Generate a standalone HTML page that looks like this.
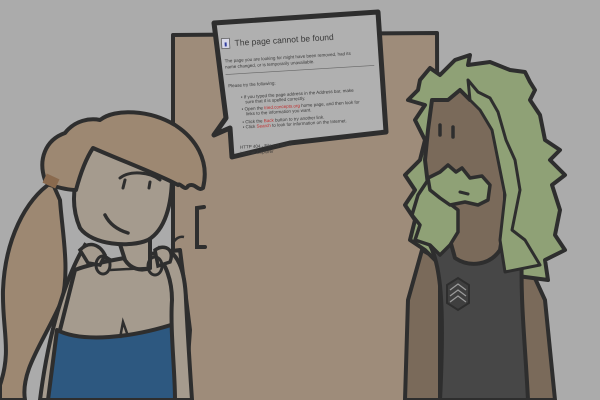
<!DOCTYPE html>
<html><head><style>
html,body{margin:0;padding:0;background:#ababab;width:600px;height:400px;overflow:hidden}
svg{display:block}
.t{font-family:"Liberation Sans",sans-serif;fill:#3a3a3a}
</style></head><body>
<svg width="600" height="400" viewBox="0 0 600 400" xmlns="http://www.w3.org/2000/svg">
<rect width="600" height="400" fill="#ababab"/>
<path d="M173 405 L173 35 L437 33 L438 405 Z" fill="#9e8c7a" stroke="#2e2e2e" stroke-width="4" stroke-linejoin="round"/>
<path d="M204 207 L197 208 L197 247 L205 247" fill="none" stroke="#2e2e2e" stroke-width="4" stroke-linecap="round"/>
<g>
<path d="M214 23 L378 12 L386 132 L290 143 L232 157 L230 128 L214 135 L226 118 Z" fill="#b0b0b0" stroke="#2e2e2e" stroke-width="5" stroke-linejoin="round"/>
<g transform="rotate(-3.5 300 80)">
<rect x="224" y="34" width="8" height="10" fill="#d8d8e8" stroke="#555" stroke-width="0.7"/>
<rect x="227" y="38" width="2" height="4" fill="#3340a0"/>
<text x="237" y="42" class="t" font-size="8.5">The page cannot be found</text>
<text x="226" y="58" class="t" font-size="4.5">The page you are looking for might have been removed, had its</text>
<text x="226" y="64" class="t" font-size="4.5">name changed, or is temporarily unavailable.</text>
<line x1="226" y1="70" x2="375" y2="70" stroke="#666" stroke-width="0.6"/>
<text x="228" y="83" class="t" font-size="4.5">Please try the following:</text>
<text x="240" y="95" class="t" font-size="4.5">• If you typed the page address in the Address bar, make</text>
<text x="244" y="100" class="t" font-size="4.5">sure that it is spelled correctly.</text>
<text x="240" y="107" class="t" font-size="4.5">• Open the <tspan fill="#c03030">tried.concepts.org</tspan> home page, and then look for</text>
<text x="244" y="112" class="t" font-size="4.5">links to the information you want.</text>
<text x="240" y="120" class="t" font-size="4.5">• Click the <tspan fill="#c03030">Back</tspan> button to try another link.</text>
<text x="240" y="125" class="t" font-size="4.5">• Click <tspan fill="#c03030">Search</tspan> to look for information on the Internet.</text>
<text x="236" y="145" class="t" font-size="4.5">HTTP 404 - File not found</text>
<text x="236" y="151" class="t" font-size="4.5">Internet Explorer</text>
</g>
</g>
<path d="M52 182 C25 200 5 240 3 290 C2 330 12 350 0 385 L0 400 L25 400 C20 370 45 340 62 300 C70 270 62 230 60 200 Z" fill="#9d8872" stroke="#2e2e2e" stroke-width="4" stroke-linejoin="round"/>
<path d="M85 245 C70 270 50 320 40 400 L75 400 C80 340 95 290 110 260 Z" fill="#a59b8e" stroke="#2e2e2e" stroke-width="4"/>
<path d="M75 270 C95 262 140 255 180 250 L190 330 L185 400 L50 400 L60 330 Z" fill="#a59b8e" stroke="#2e2e2e" stroke-width="4" stroke-linejoin="round"/>
<path d="M57 330 C80 342 130 340 186 320 L186 400 L48 400 Z" fill="#2d5880" stroke="#2e2e2e" stroke-width="4" stroke-linejoin="round"/>
<path d="M120 338 L123 322 L128 336" fill="none" stroke="#2e2e2e" stroke-width="2.5"/>
<path d="M160 248 C178 250 185 270 186 300 C188 340 190 370 192 400 L175 400 C175 370 170 330 172 300 C172 280 165 262 158 258 Z" fill="#a59b8e" stroke="#2e2e2e" stroke-width="4"/>
<path d="M118 238 L125 260 C130 268 140 272 150 268 L150 240 Z" fill="#a59b8e" stroke="#2e2e2e" stroke-width="4"/>
<path d="M92 148 C75 170 68 200 80 228 C92 245 130 248 148 240 C165 230 172 205 172 175 L160 160 Z" fill="#a59b8e" stroke="#2e2e2e" stroke-width="4" stroke-linejoin="round"/>
<path d="M80 250 C90 240 100 245 105 255 L100 265 L88 263 Z" fill="#a59b8e" stroke="#2e2e2e" stroke-width="3.5"/>
<path d="M155 250 C165 243 175 250 170 262 L158 266 Z" fill="#a59b8e" stroke="#2e2e2e" stroke-width="3.5"/>
<ellipse cx="103" cy="265" rx="7" ry="9" fill="none" stroke="#2e2e2e" stroke-width="3"/>
<ellipse cx="155" cy="266" rx="7" ry="9" fill="none" stroke="#2e2e2e" stroke-width="3"/>
<path d="M110 270 L148 268" stroke="#2e2e2e" stroke-width="2.5"/>
<path d="M172 245 C175 238 180 236 184 237" fill="none" stroke="#2e2e2e" stroke-width="2.5"/>
<path d="M45 180 C38 160 45 140 65 133 C75 120 90 118 100 120 C115 108 150 110 175 125 C195 138 210 160 203 188 C198 192 195 182 188 186 C185 192 180 182 178 185 C160 175 120 160 93 148 C85 160 80 175 76 190 C70 190 60 188 50 185 Z" fill="#9d8872" stroke="#2e2e2e" stroke-width="4" stroke-linejoin="round"/>
<rect x="44" y="176" width="14" height="10" fill="#8a6a4e" transform="rotate(25 51 181)"/>
<path d="M120 178 C130 170 150 172 160 180" fill="none" stroke="#2e2e2e" stroke-width="3" stroke-linecap="round"/>
<path d="M125 180 L123 188" stroke="#2e2e2e" stroke-width="3" stroke-linecap="round"/>
<path d="M150 182 L149 188" stroke="#2e2e2e" stroke-width="3" stroke-linecap="round"/>
<path d="M105 215 C110 225 118 230 128 233" fill="none" stroke="#2e2e2e" stroke-width="3.5" stroke-linecap="round"/>
<!-- man -->
<path d="M422 250 L408 300 L405 400 L440 400 L440 260 Z" fill="#7a6a5a" stroke="#2e2e2e" stroke-width="4"/>
<path d="M522 250 L545 300 L555 400 L525 400 L520 300 Z" fill="#7a6a5a" stroke="#2e2e2e" stroke-width="4"/>
<path d="M420 80 L430 68 L440 75 L455 60 L470 55 L468 65 L490 62 L510 70 L525 72 L530 82 L535 90 L530 100 L540 115 L545 140 L560 150 L550 160 L565 175 L552 185 L560 210 L555 235 L565 250 L545 260 L548 280 L510 275 L500 260 L470 260 L440 265 L425 250 L410 240 L415 220 L405 205 L415 190 L405 175 L420 160 L425 140 L415 120 L425 105 L408 100 L418 90 Z" fill="#8fa176" stroke="#2e2e2e" stroke-width="4" stroke-linejoin="round"/>
<path d="M430 245 C440 265 445 300 440 400 L528 400 C525 340 520 300 522 250 C505 240 470 238 430 245 Z" fill="#474747" stroke="#2e2e2e" stroke-width="4"/>
<path d="M432 100 L448 100 L460 90 L470 100 L478 95 L488 108 L498 115 L505 150 L505 220 L500 250 C490 265 470 268 455 258 L450 240 L455 210 L440 200 L428 185 L425 160 L428 130 Z" fill="#7a6a5a" stroke="#2e2e2e" stroke-width="4" stroke-linejoin="round"/>
<!-- left lower hair over face -->
<path d="M428 180 L418 195 L412 215 L420 225 L415 240 L430 245 L440 255 L450 245 L458 232 L458 210 L445 200 Z" fill="#8fa176" stroke="#2e2e2e" stroke-width="3.5" stroke-linejoin="round"/>
<path d="M468 80 L478 92 L490 98 L498 112 L506 140 L515 160 L520 190 L512 230 L525 240 L540 265 L505 272 L500 240 L505 195 L498 160 L492 130 L480 110 L470 100 Z" fill="#8fa176" stroke="#2e2e2e" stroke-width="3" stroke-linejoin="round"/>
<path d="M428 178 L440 172 L448 165 L456 172 L462 168 L470 178 L482 176 L490 185 L488 200 L478 205 L465 202 L450 205 L440 198 L430 190 Z" fill="#8fa176" stroke="#2e2e2e" stroke-width="3.5" stroke-linejoin="round"/>
<path d="M460 192 L468 194" stroke="#2e2e2e" stroke-width="3" stroke-linecap="round"/>
<path d="M440 125 L440 135 M453 127 L453 137" stroke="#2e2e2e" stroke-width="3.5" stroke-linecap="round"/>
<path d="M447 285 L458 278 L469 285 L469 303 L458 310 L447 303 Z" fill="#3f3f3f" stroke="#2e2e2e" stroke-width="2"/>
<path d="M450 290 L458 284 L466 290 M450 296 L458 290 L466 296 M450 302 L458 296 L466 302" fill="none" stroke="#9a9a9a" stroke-width="1.3"/>
</svg>
</body></html>
